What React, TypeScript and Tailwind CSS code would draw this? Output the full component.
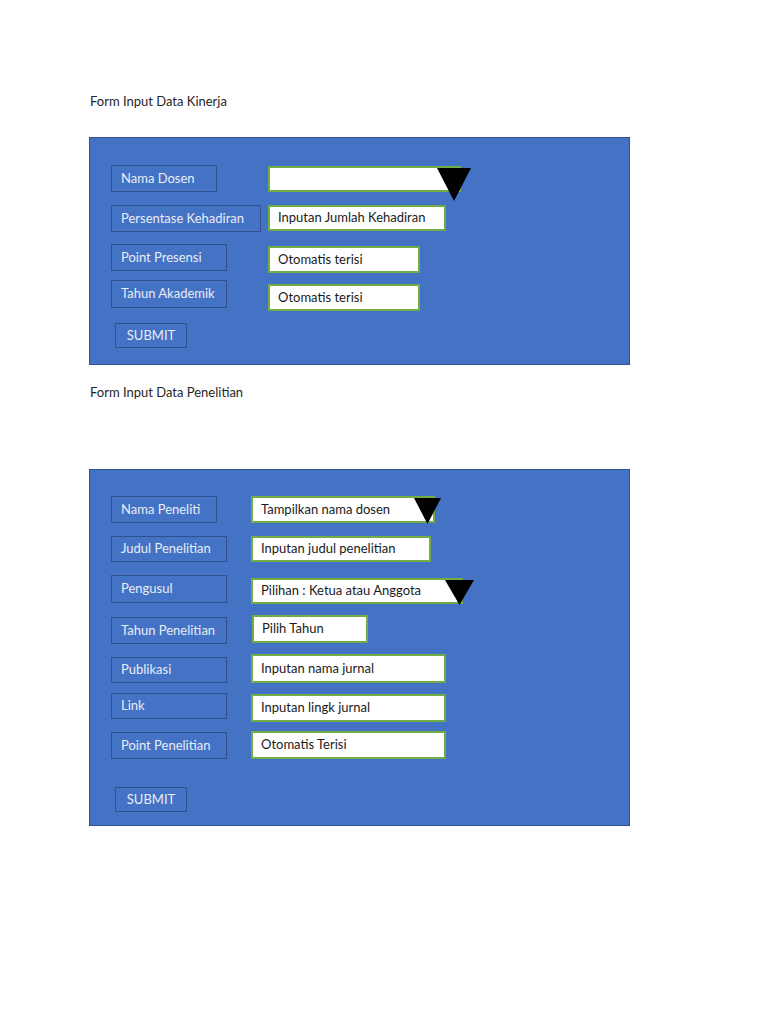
import React from "react";

type Row = {
  label: string;
  value: string;
  rowCls: string;
  labelCls: string;
  inputCls: string;
  arrow?: "kinerja" | "dosen" | "pengusul";
};

// Downward triangle drawn over the right end of a dropdown field
function Arrow({ kind }: { kind: "kinerja" | "dosen" | "pengusul" }) {
  if (kind === "kinerja") {
    return (
      <svg className="absolute left-[167px] top-0" width="34" height="33" viewBox="0 0 34 33">
        <polygon points="0,0 34,0 17,33" fill="#000" />
      </svg>
    );
  }
  if (kind === "dosen") {
    return (
      <svg className="absolute left-[161px] top-0" width="27" height="26" viewBox="0 0 27 26">
        <polygon points="0,0 27,0 13.5,26" fill="#000" />
      </svg>
    );
  }
  return (
    <svg className="absolute left-[192px] top-0" width="29" height="25" viewBox="0 0 29 25">
      <polygon points="0,0 29,0 14.5,25" fill="#000" />
    </svg>
  );
}

function FormPanel({
  rows,
  colCls,
  panelCls,
  submitCls,
}: {
  rows: Row[];
  colCls: string;
  panelCls: string;
  submitCls: string;
}) {
  return (
    <div className={`flex w-[541px] flex-col border border-[#2f528f] bg-[#4472c4] ${panelCls}`}>
      {rows.map((r) => (
        <div key={r.label} className={`flex items-start pl-[21px] ${r.rowCls}`}>
          <div className={`shrink-0 ${colCls}`}>
            <div
              className={`flex items-center border-[1.5px] border-[#2f528f] pl-[9px] text-[13px] text-[#e8edf7] ${r.labelCls}`}
            >
              {r.label}
            </div>
          </div>
          <div
            className={`relative flex items-center border-2 border-[#70ad47] bg-white pl-[8px] text-[13px] text-[#1a1a1a] ${r.inputCls}`}
          >
            {r.value}
            {r.arrow && <Arrow kind={r.arrow} />}
          </div>
        </div>
      ))}
      <div
        className={`ml-[25px] flex h-[25px] w-[72px] items-center justify-center border-[1.5px] border-[#2f528f] text-[13px] text-[#e8edf7] ${submitCls}`}
      >
        SUBMIT
      </div>
    </div>
  );
}

const kinerja: Row[] = [
  {
    label: "Nama Dosen",
    value: "",
    rowCls: "",
    labelCls: "w-[106px] h-[27px]",
    inputCls: "w-[193px] h-[26px] mt-px",
    arrow: "kinerja",
  },
  {
    label: "Persentase Kehadiran",
    value: "Inputan Jumlah Kehadiran",
    rowCls: "mt-[13px]",
    labelCls: "w-[150px] h-[27px]",
    inputCls: "w-[178px] h-[26px]",
  },
  {
    label: "Point Presensi",
    value: "Otomatis terisi",
    rowCls: "mt-[12px]",
    labelCls: "w-[116px] h-[27px]",
    inputCls: "w-[152px] h-[27px] mt-[2px]",
  },
  {
    label: "Tahun Akademik",
    value: "Otomatis terisi",
    rowCls: "mt-[7px]",
    labelCls: "w-[116px] h-[28px]",
    inputCls: "w-[152px] h-[27px] mt-[4px]",
  },
];

const penelitian: Row[] = [
  {
    label: "Nama Peneliti",
    value: "Tampilkan nama dosen",
    rowCls: "",
    labelCls: "w-[106px] h-[27px]",
    inputCls: "w-[184px] h-[27px]",
    arrow: "dosen",
  },
  {
    label: "Judul Penelitian",
    value: "Inputan judul penelitian",
    rowCls: "mt-[13px]",
    labelCls: "w-[116px] h-[26px]",
    inputCls: "w-[180px] h-[26px]",
  },
  {
    label: "Pengusul",
    value: "Pilihan : Ketua atau Anggota",
    rowCls: "mt-[13px]",
    labelCls: "w-[116px] h-[28px]",
    inputCls: "w-[212px] h-[26px] mt-[3px]",
    arrow: "pengusul",
  },
  {
    label: "Tahun Penelitian",
    value: "Pilih Tahun",
    rowCls: "mt-[11px]",
    labelCls: "w-[116px] h-[27px] mt-[2px]",
    inputCls: "w-[116px] h-[28px] ml-px",
  },
  {
    label: "Publikasi",
    value: "Inputan nama jurnal",
    rowCls: "mt-[10px]",
    labelCls: "w-[116px] h-[26px] mt-[3px]",
    inputCls: "w-[195px] h-[29px]",
  },
  {
    label: "Link",
    value: "Inputan lingk jurnal",
    rowCls: "mt-[10px]",
    labelCls: "w-[116px] h-[26px]",
    inputCls: "w-[195px] h-[28px] mt-px",
  },
  {
    label: "Point Penelitian",
    value: "Otomatis Terisi",
    rowCls: "mt-[9px]",
    labelCls: "w-[116px] h-[27px] mt-px",
    inputCls: "w-[195px] h-[28px]",
  },
];

export default function App() {
  return (
    <div className="min-h-[1024px] w-[768px] bg-white font-['Lato','Open_Sans','Liberation_Sans',sans-serif]">
      <div className="flex flex-col pl-[89px] pt-[93px]">
        <p className="pl-px text-[13px] leading-[16px] text-[#262626]">Form Input Data Kinerja</p>
        <div className="mt-[28px]">
          <FormPanel rows={kinerja} colCls="w-[157px]" panelCls="pt-[27px] pb-[16px]" submitCls="mt-[12px]" />
        </div>
        <p className="mt-[19px] pl-px text-[13px] leading-[16px] text-[#262626]">
          Form Input Data Penelitian
        </p>
        <div className="mt-[69px]">
          <FormPanel rows={penelitian} colCls="w-[140px]" panelCls="pt-[26px] pb-[13px]" submitCls="mt-[28px]" />
        </div>
      </div>
    </div>
  );
}
